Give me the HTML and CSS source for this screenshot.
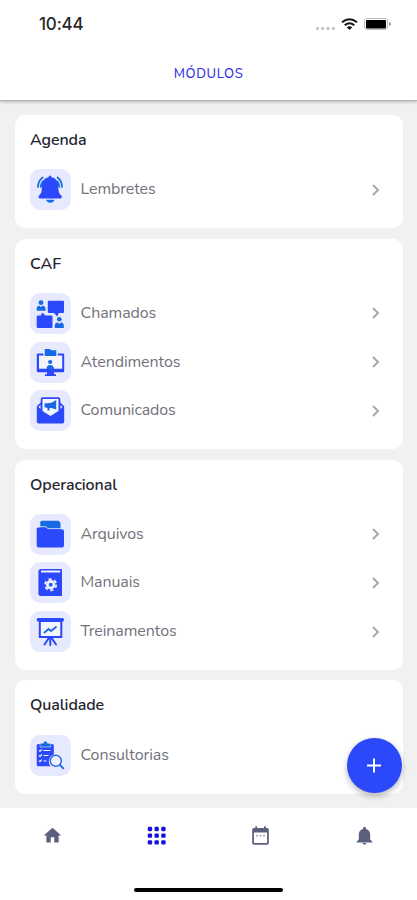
FILE: index.html
```html
<!DOCTYPE html>
<html lang="pt-BR">
<head>
<meta charset="utf-8">
<title>Módulos</title>
<link rel="stylesheet" href="styles.css">
</head>
<body>
<div class="app">
  <header class="header">
    <div class="status">
      <span class="time">10:44</span>
      <svg class="status-icons" width="76" height="16" viewBox="0 0 76 16">
        <g fill="#c4c4c4"><rect x="1" y="11" width="3" height="3" rx="1"/><rect x="6" y="11" width="3" height="3" rx="1"/><rect x="11.500" y="11" width="3" height="3" rx="1"/><rect x="17" y="11" width="3" height="3" rx="1"/></g>
        <g fill="none" stroke="#151515" stroke-width="2"><path d="M27 6.300q7.500-6.200 15 0"/><path d="M29.700 9.200q4.800-4 9.600 0"/></g>
        <path d="M31.700 11.200q2.800-2 5.600 0L34.500 14z" fill="#151515"/>
        <rect x="49.500" y="2.500" width="23" height="11" rx="2.500" fill="#fff" stroke="#bdbdbd"/>
        <rect x="51" y="4" width="20" height="8.500" rx="1" fill="#000"/>
        <path d="M74 6v4q2-.5 2-2t-2-2z" fill="#999"/>
      </svg>
    </div>
    <h1>MÓDULOS</h1>
  </header>

  <main class="modules">
    <section class="card">
      <h2>Agenda</h2>
      <a class="row">
        <svg class="tile" viewBox="0 0 41 41">
          <path class="a" d="M20 6.500q1.500 0 1.500 1.800c4.500.7 6.800 4.400 6.800 8.700 0 5 .4 6.800 2.200 8.700 1 1 1.300 1.600 1.300 2.400 0 .9-.6 1.400-1.500 1.400H9.900c-1 0-1.400-.5-1.400-1.400 0-.8.300-1.400 1.300-2.400 1.800-1.900 2-3.700 2-8.700 0-4.300 2.300-8 6.800-8.700Q18.600 6.500 20 6.500z"/>
          <path class="b" d="M16 30.700h8.500q-1 3-4.200 3T16 30.700z"/>
          <path class="lb" stroke-width="1.700" d="M12.700 8.500Q8 12 8 18M12.700 12.500q-1.900 2.500-1.900 5.500M27.500 8.500Q32 12 32 18M27.500 12.500q1.800 2.500 1.800 5.500"/>
        </svg>
        <span>Lembretes</span>
        <svg class="chev" viewBox="0 0 10 14"><path d="M2 2l5 5-5 5"/></svg>
      </a>
    </section>

    <section class="card">
      <h2>CAF</h2>
      <a class="row">
        <svg class="tile" viewBox="0 0 41 41">
          <circle class="b" cx="11" cy="9.700" r="2.400"/><path class="b" d="M6.700 17.700v-2q0-3 3-3L11 14.300l1.300-1.600q3.200 0 3.200 3v2z"/>
          <path class="a" d="M19 7.700h14q1 0 1 1V19q0 1-1 1h-4.300l-1.300 3.500L24 20h-5q-1.200 0-1.200-1V8.700q0-1 1.200-1zM8 22.500h3l1-3 3.500 3h6q1 0 1 1V34q0 1-1 1H8q-1.300 0-1.300-1V23.500q0-1 1.300-1z"/>
          <circle class="b" cx="29.300" cy="26.300" r="2.300"/><path class="b" d="M24.800 35v-2.500q0-3 3-3l1.500 1.500 1.500-1.500q3 0 3 3V35z"/>
        </svg>
        <span>Chamados</span>
        <svg class="chev" viewBox="0 0 10 14"><path d="M2 2l5 5-5 5"/></svg>
      </a>
      <a class="row">
        <svg class="tile" viewBox="0 0 41 41">
          <rect x="8" y="12" width="25" height="16" fill="#f4f5ff"/>
          <path class="a" d="M13.500 11.500v2H9v13.200h23.200V13.500h-4.500v-2H33q1.200 0 1.200 1.200V29q0 1.200-1.200 1.200h-9v2h2V34H15v-1.800h2v-2H8Q6.800 30.200 6.800 29V12.700q0-1.200 1.200-1.200z"/>
          <path class="b" d="M14.800 7h5l1.500 1.200h5V14H14.800z"/>
          <circle class="b" cx="20.200" cy="20" r="2.100"/><path class="b" d="M16.500 27q0-4 3.700-4t3.700 4z"/>
        </svg>
        <span>Atendimentos</span>
        <svg class="chev" viewBox="0 0 10 14"><path d="M2 2l5 5-5 5"/></svg>
      </a>
      <a class="row">
        <svg class="tile" viewBox="0 0 41 41">
          <path class="a" d="M10.700 12.500V9q0-1.800 1.800-1.800h16Q30.300 7.200 30.300 9v3.500l3.200 3q.7.700.7 2V31.500q0 2-2 2H8.800q-2 0-2-2V17.500q0-1.300.7-2z"/>
          <path fill="#f4f5ff" d="M12.500 9h16v12l-8 5-8-5z"/><path fill="#f4f5ff" d="M8.500 17l2-2v4zM32.500 17l-2-2v4z"/>
          <path class="b" d="M14.500 13.500l7-.8 4.700-2.700v9.500l-4.700-1.600-2 .1v2.400h-2V18l-3-.7z"/>
        </svg>
        <span>Comunicados</span>
        <svg class="chev" viewBox="0 0 10 14"><path d="M2 2l5 5-5 5"/></svg>
      </a>
    </section>

    <section class="card">
      <h2>Operacional</h2>
      <a class="row">
        <svg class="tile" viewBox="0 0 41 41">
          <path class="b" d="M10.300 18V8.200q0-1.500 1.500-1.500H28.500l2 2V18z"/>
          <path d="M8.500 12.800h7.500l2 2h14q2 0 2 2" fill="none" stroke="#e7e9ff"/>
          <path class="a" d="M8 13.500h7.500l2.300 1.800H32q2 0 2 2V31.500q0 2-2 2H8.700q-2 0-2-2V15q0-1.500 1.300-1.500z"/>
        </svg>
        <span>Arquivos</span>
        <svg class="chev" viewBox="0 0 10 14"><path d="M2 2l5 5-5 5"/></svg>
      </a>
      <a class="row">
        <svg class="tile" viewBox="0 0 41 41">
          <path class="a" d="M11 7h20q1 0 1 1v25q0 1-1 1H11q-2.600 0-2.600-2.500v-22Q8.400 7 11 7z"/>
          <path d="M11 9.500h19.200" stroke="#f4f5ff" stroke-width="2"/>
          <circle cx="20.700" cy="22.700" r="4.700" fill="#f4f5ff"/><circle cx="20.700" cy="22.700" r="5.600" fill="none" stroke="#f4f5ff" stroke-width="1.700" stroke-dasharray="3.200 2.660"/>
          <circle class="b" cx="20.700" cy="22.700" r="2"/>
        </svg>
        <span>Manuais</span>
        <svg class="chev" viewBox="0 0 10 14"><path d="M2 2l5 5-5 5"/></svg>
      </a>
      <a class="row">
        <svg class="tile" viewBox="0 0 41 41">
          <rect x="9.800" y="10" width="21.500" height="16" fill="#f4f5ff" stroke="#2c48fb" stroke-width="2"/>
          <rect class="a" x="6.700" y="7" width="27.300" height="3.500" rx="1.500"/>
          <path class="la" stroke-width="2" d="M20.300 26v8M18.500 27.500l-4 6M22 27.500l4 6"/>
          <path class="lb" stroke-width="1.800" d="M14.500 21.500l4-3.500 2.500 2L26 16"/>
        </svg>
        <span>Treinamentos</span>
        <svg class="chev" viewBox="0 0 10 14"><path d="M2 2l5 5-5 5"/></svg>
      </a>
    </section>

    <section class="card">
      <h2>Qualidade</h2>
      <a class="row">
        <svg class="tile" viewBox="0 0 41 41">
          <path class="a" d="M8.200 9h14q1.600 0 1.600 1.500v9q-5 2-5 7 0 2.500 1.500 4.700H8.200q-1.500 0-1.500-1.500V10.500Q6.700 9 8.200 9z"/>
          <path d="M9 15.300l1 1 1.800-2M9 20.500l1 1 1.800-2M9 25.700l1 1 1.800-2M13.500 15.500h7M13.500 20.500h5M13.500 26h3" fill="none" stroke="#f4f5ff" stroke-width="1.200"/>
          <path class="b" d="M10 12V9.500q0-1.300 1.500-1.300h1.700Q13.500 6 15.300 6t2.200 2.200h1.700q1.500 0 1.500 1.300V12z" stroke="#e7e9ff" stroke-width=".6"/>
          <circle cx="25.800" cy="25.800" r="5.500" fill="#eef0ff" stroke="#2c68e6" stroke-width="1.400"/>
          <path class="lb" stroke-width="1.800" d="M30 30l3.300 3.300"/>
        </svg>
        <span>Consultorias</span>
      </a>
    </section>
  </main>

  <button class="fab" aria-label="Adicionar"><svg width="15" height="15" viewBox="0 0 15 15"><path d="M7 .5v14M0 7.500h14" stroke="#fff" stroke-width="2"/></svg></button>

  <footer class="footer">
    <nav class="tabs">
      <svg viewBox="0 0 24 24"><path fill="#5c607f" d="M10 20v-6h4v6h5v-8h3L12 3 2 12h3v8z"/></svg>
      <svg viewBox="0 0 24 24"><g fill="#1212dc"><rect x="2" y="2" width="5" height="5" rx="1.300"/><rect x="9.700" y="2" width="5" height="5" rx="1.300"/><rect x="17.400" y="2" width="5" height="5" rx="1.300"/><rect x="2" y="9.700" width="5" height="5" rx="1.300"/><rect x="9.700" y="9.700" width="5" height="5" rx="1.300"/><rect x="17.400" y="9.700" width="5" height="5" rx="1.300"/><rect x="2" y="17.400" width="5" height="5" rx="1.300"/><rect x="9.700" y="17.400" width="5" height="5" rx="1.300"/><rect x="17.400" y="17.400" width="5" height="5" rx="1.300"/></g></svg>
      <svg viewBox="0 0 24 24"><path fill="#5c607f" fill-rule="evenodd" d="M6 1.500h2v2h8v-2h2v2h1.500q2 0 2 2v15q0 2-2 2h-15q-2 0-2-2v-15q0-2 2-2H6zM4.500 8.500v12h15v-12z"/><path fill="#a3a5b7" d="M7 11h2v2H7zM11 11h2v2h-2zM15 11h2v2h-2z"/></svg>
      <svg viewBox="0 0 24 24"><path fill="#5c607f" d="M12 22.500c1.100 0 2-.9 2-2h-4c0 1.100.9 2 2 2zM18.500 16.500v-5.500c0-3.070-1.640-5.640-4.800-6.320V4c0-.83-.67-2-1.700-2s-1.700 1.170-1.700 2v.68C7.130 5.360 5.500 7.920 5.500 11v5.500l-2.500 2.500v1h18v-1z"/></svg>
    </nav>
    <div class="home-bar"></div>
  </footer>
</div>
</body>
</html>
```
FILE: styles.css
```css
* { box-sizing: border-box; }
body {
  margin: 0;
  background: #f1f1f1;
  font-family: Nunito, Lato, "Open Sans", sans-serif;
}
.app {
  position: relative;
  display: flex;
  flex-direction: column;
  width: 417px;
  height: 900px;
  overflow: hidden;
}
.header {
  height: 101px;
  flex: none;
  background: #fff;
  border-bottom: 1px solid #b4b4b4;
  box-shadow: 0 1px 3px rgba(0, 0, 0, .25);
}
.status {
  display: flex;
  justify-content: space-between;
  align-items: center;
  height: 48px;
  padding: 0 26px 0 39px;
}
.time {
  font: 500 17px/20px Inter, sans-serif;
  letter-spacing: -.2px;
  color: #2a2a2a;
}
h1 {
  margin: 16px 0 0;
  font-size: 13px;
  line-height: 20px;
  font-weight: 500;
  letter-spacing: .65px;
  text-align: center;
  color: #3034e8;
}
.modules {
  flex: 1;
  display: flex;
  flex-direction: column;
  gap: 10.400px;
  padding: 14px 14px 0 15px;
}
.card {
  flex: none;
  padding: 15px 15px 18px;
  border-radius: 10px;
  background: #fff;
}
h2 {
  margin: 0 0 19.300px;
  font-size: 16px;
  line-height: 20px;
  font-weight: 600;
  letter-spacing: -.1px;
  color: #252532;
}
.row {
  display: flex;
  align-items: center;
  height: 41px;
  padding-right: 7.500px;
  font-size: 16px;
  letter-spacing: -.1px;
  color: #72727c;
}
.row + .row { margin-top: 7.600px; }
.row span {
  margin: -1px 0 0 9.500px;
}
.tile {
  flex: none;
  width: 41px;
  height: 41px;
  border-radius: 10px;
  background: #e7e9ff;
}
.a { fill: #2c48fb; }
.b { fill: #1769e4; }
.la { fill: none; stroke: #2c48fb; stroke-linecap: round; }
.lb { fill: none; stroke: #1769e4; stroke-linecap: round; }
.chev {
  width: 10px;
  height: 14px;
  margin-left: auto;
  fill: none;
  stroke: #a8a8a8;
  stroke-width: 2;
}
.fab {
  position: absolute;
  left: 347px;
  top: 738px;
  display: grid;
  place-items: center;
  width: 55px;
  height: 55px;
  padding: 0;
  border: 0;
  border-radius: 50%;
  background: #2c48fb;
  box-shadow: 0 3px 6px rgba(0, 0, 0, .28);
}
.footer {
  flex: none;
  height: 92px;
  background: #fff;
}
.tabs {
  display: grid;
  grid-template-columns: repeat(4, 1fr);
  justify-items: center;
  padding-top: 17px;
}
.tabs svg { width: 21px; height: 21px; }
.home-bar {
  width: 149px;
  height: 4px;
  margin: 42px auto 0;
  border-radius: 2px;
  background: #000;
}
```
